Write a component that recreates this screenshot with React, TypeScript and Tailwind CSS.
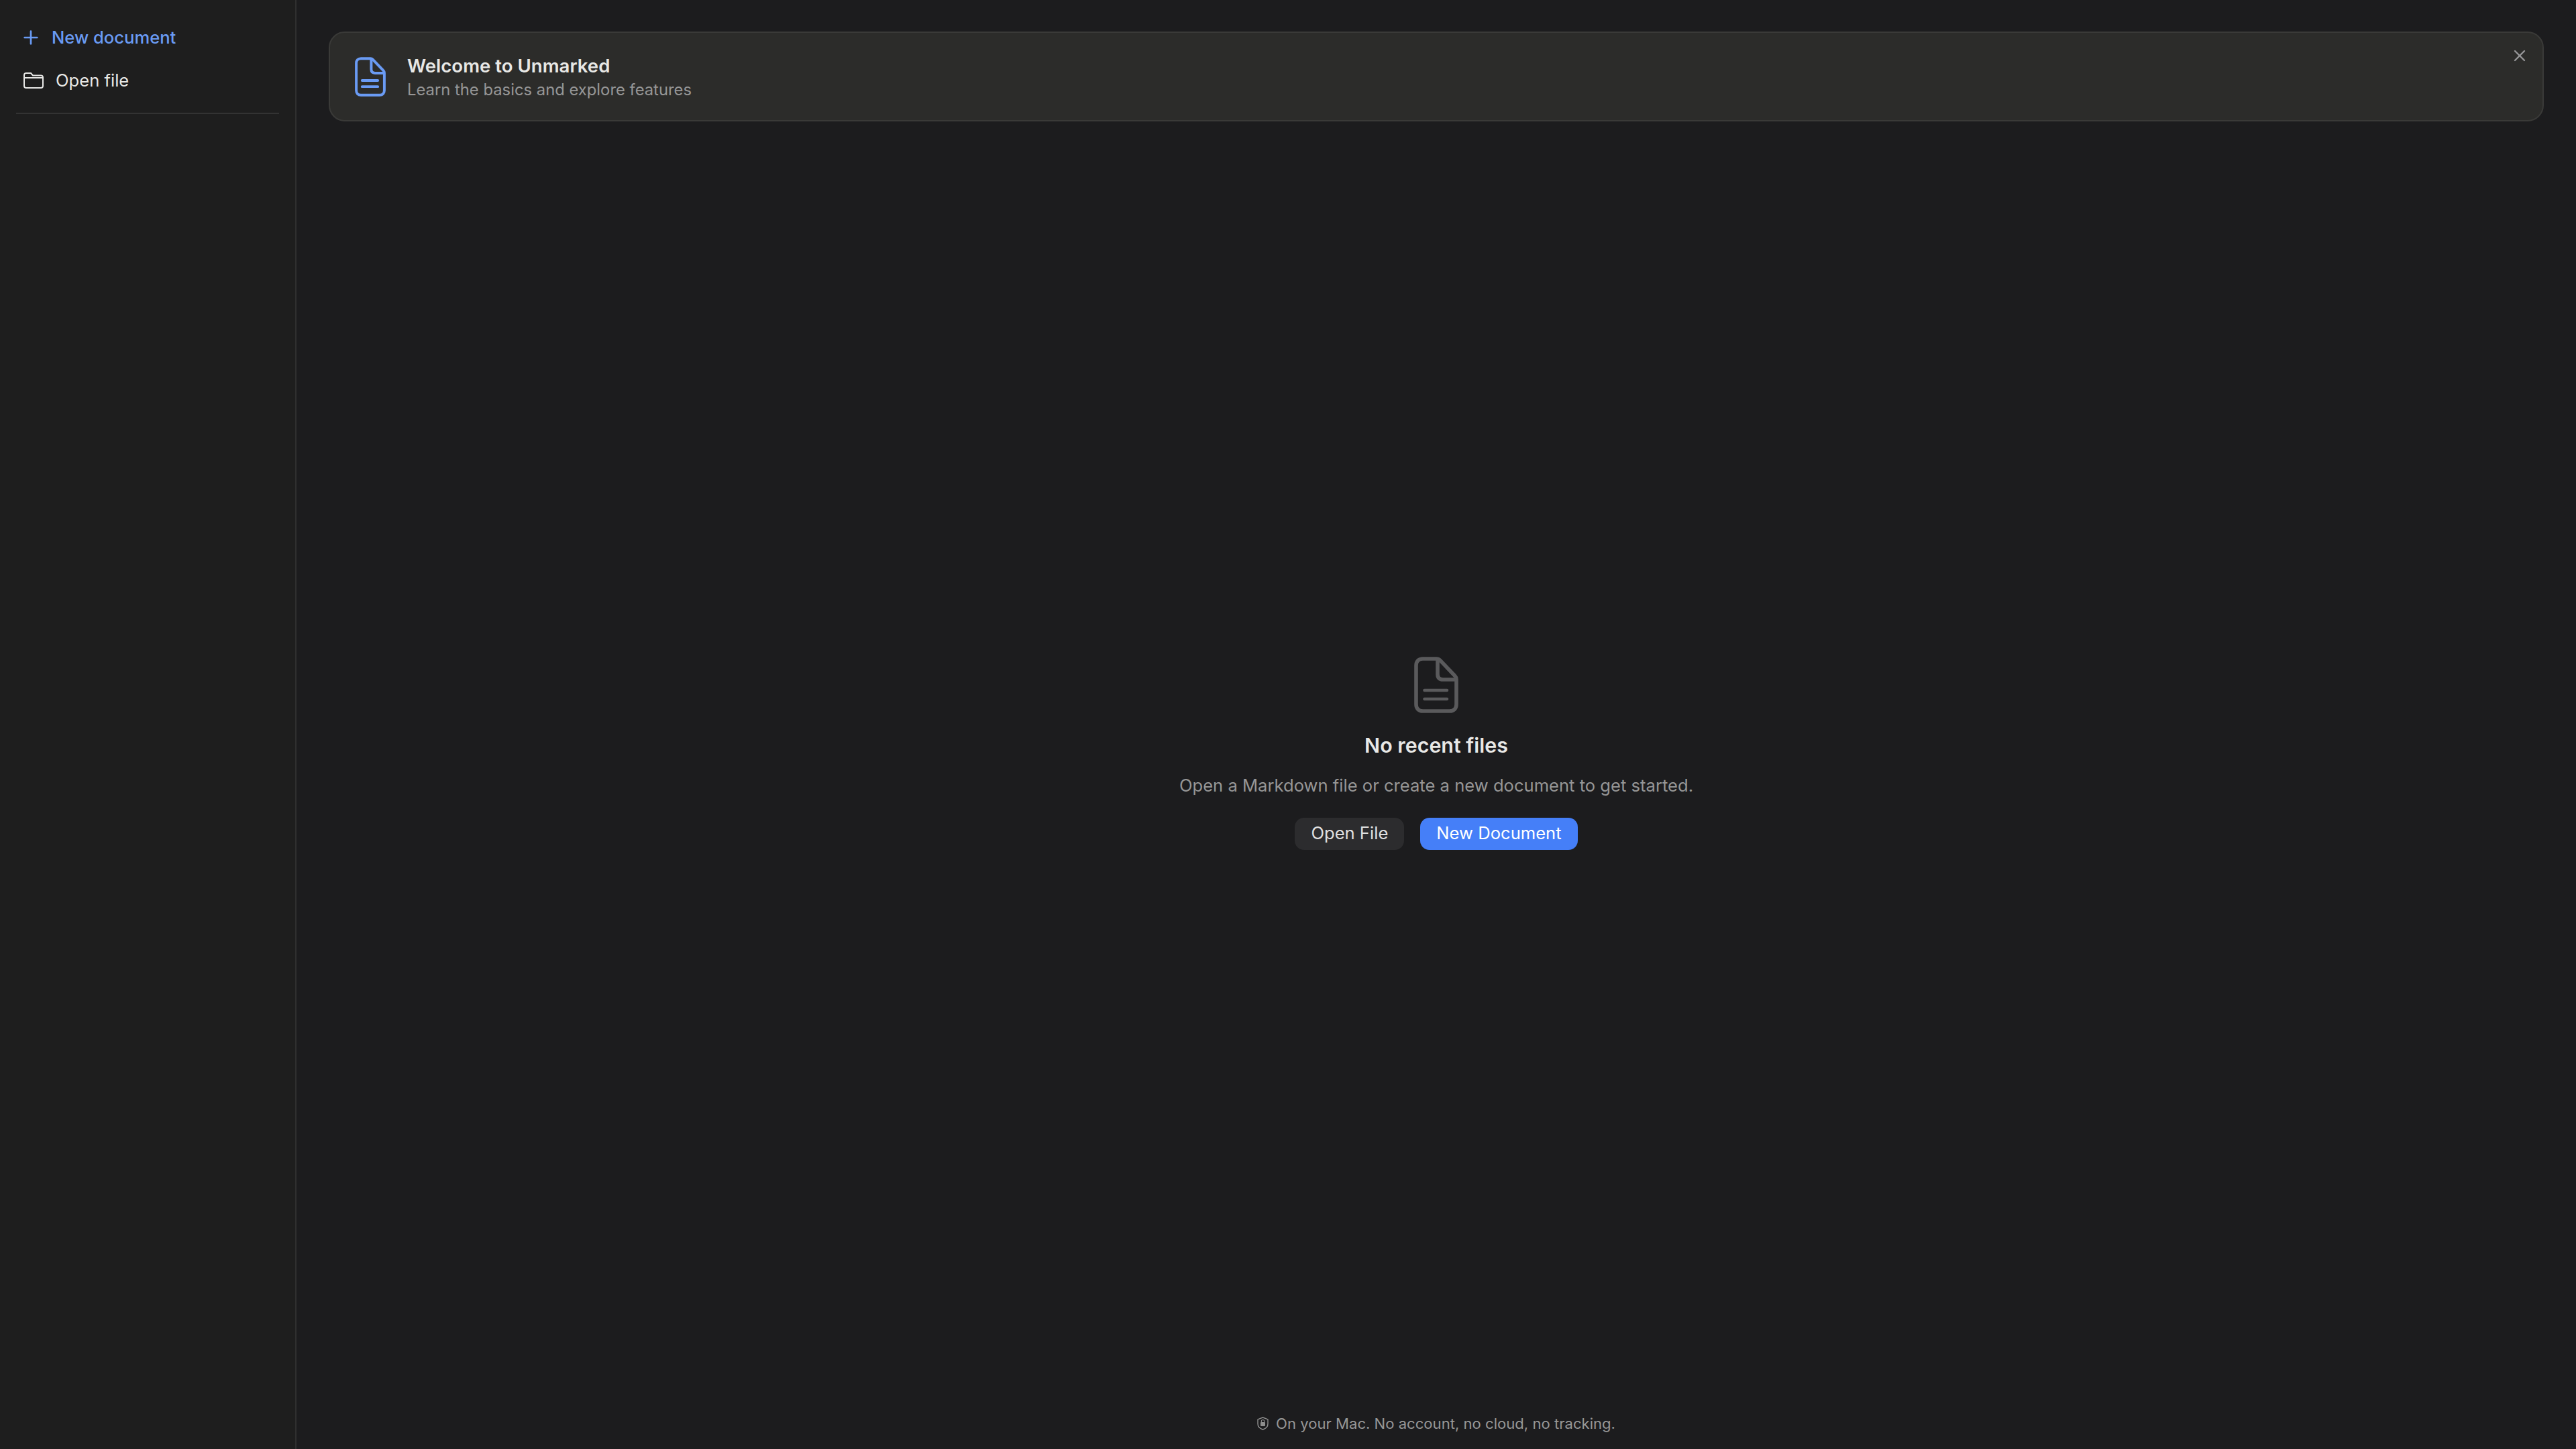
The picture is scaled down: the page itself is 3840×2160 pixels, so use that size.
import { Plus, X } from "lucide-react";

function DocIcon({ w, h, color, stroke, line }: { w: number; h: number; color: string; stroke: number; line: number }) {
  return (
    <svg width={w} height={h} viewBox="0 0 66 84" fill="none" stroke={color} strokeWidth={stroke} strokeLinecap="round" strokeLinejoin="round" className="shrink-0">
      <path d="M13 3H33.5C35.5 3 37.3 3.8 38.6 5.2L60.6 28.2C62.2 29.8 63 31.6 63 33.6V71C63 77 59.5 81 53 81H13C6.5 81 3 77 3 71V13C3 7 6.5 3 13 3Z" />
      <path d="M35 4V26C35 31 37.5 34 43 34H62" />
      <path d="M15.5 50H49M15.5 63H49" strokeWidth={line} />
    </svg>
  );
}

export default function App() {
  return (
    <div className="flex h-screen w-full bg-[#1c1c1e] font-['Inter',sans-serif] text-[#e8e8e6]">
      <aside className="flex w-[442px] shrink-0 flex-col border-r-2 border-[#2f2f2f] bg-[#1e1e1e] px-6 pt-[28px]">
        <div className="flex h-[56px] items-center gap-[15px] pl-[6px] text-[25.6px] font-medium text-[#6a9bf4]">
          <Plus size={32} strokeWidth={2} />
          <span className="pt-[1px]">New document</span>
        </div>
        <div className="mt-2 flex h-[56px] items-center gap-[18px] pl-[11px] text-[25.6px]">
          <svg width="30" height="24" viewBox="0 0 30 24" fill="none" stroke="#e8e8e6" strokeWidth="2" strokeLinejoin="round" className="shrink-0">
            <path d="M1 4C1 2.3 2.3 1 4 1H11L14 4.5H26C27.7 4.5 29 5.8 29 7.5V20C29 21.7 27.7 23 26 23H4C2.3 23 1 21.7 1 20Z" />
            <path d="M1 8H29" />
          </svg>
          <span className="pt-[1px]">Open file</span>
        </div>
        <div className="mt-[20px] h-[2px] bg-[#333333]" />
      </aside>
      <main className="flex min-w-0 flex-1 flex-col">
        <div className="relative mx-12 mt-[47px] flex h-[134px] shrink-0 items-center gap-[32px] rounded-[24px] border-2 border-[#3a3a38] bg-[#2c2c2a] pl-[37px]">
          <DocIcon w={46} h={59} color="#6a9bf4" stroke={5.7} line={5.7} />
          <div className="flex flex-col pt-[3px]">
            <span className="text-[27.6px] leading-[34px] font-semibold">Welcome to Unmarked</span>
            <span className="mt-[3px] text-[23.8px] leading-[32px] text-[#969696]">Learn the basics and explore features</span>
          </div>
          <X size={28} strokeWidth={2} className="absolute top-[20px] right-[20px] text-[#98989a]" />
        </div>
        <div className="flex flex-1 flex-col items-center justify-center">
          <DocIcon w={66} h={84} color="#5a5a5c" stroke={5.6} line={4.6} />
          <h2 className="mt-[26px] text-[30.4px] leading-[44px] font-semibold">No recent files</h2>
          <p className="mt-[20px] text-[25.6px] leading-[36px] text-[#969696]">Open a Markdown file or create a new document to get started.</p>
          <div className="mt-[30px] flex gap-6">
            <button className="h-[48px] rounded-[14px] bg-[#2c2c2e] px-6 text-[25.6px] text-[#e0e0e0]">Open File</button>
            <button className="h-[48px] rounded-[14px] bg-[#457ff8] px-6 text-[25.6px] text-white">New Document</button>
          </div>
        </div>
        <div className="flex h-[96px] shrink-0 items-end justify-center gap-[11px] pb-[24px] text-[22.1px] leading-[28px] text-[#969696]">
          <svg width="17" height="20" viewBox="0 0 17 20" fill="none" className="mb-[4px] shrink-0">
            <path d="M8.5 1L16 3.8V10.5C16 14.8 12.8 17.6 8.5 19C4.2 17.6 1 14.8 1 10.5V3.8Z" stroke="#8e8e8e" strokeWidth="1.4" strokeLinejoin="round" />
            <rect x="5" y="8" width="7" height="6" rx="1" fill="#8e8e8e" />
            <path d="M6.3 8V6.6C6.3 5.3 7.2 4.5 8.5 4.5S10.7 5.3 10.7 6.6V8" stroke="#8e8e8e" strokeWidth="1.1" />
          </svg>
          <span>On your Mac. No account, no cloud, no tracking.</span>
        </div>
      </main>
    </div>
  );
}
